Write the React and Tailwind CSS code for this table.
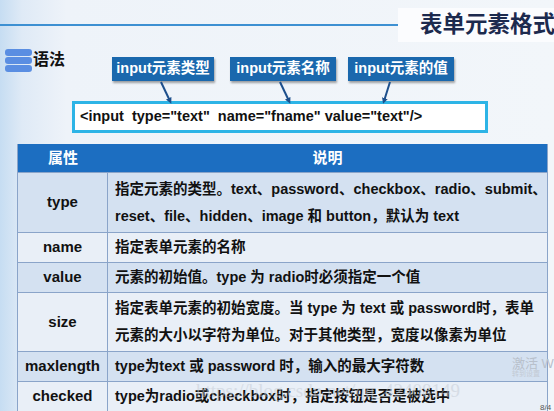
import React from "react";

const FONT = { fontFamily: '"Liberation Sans", Arial, "Noto Sans CJK SC", sans-serif' };

const rows = [
  { k: "type", h: "h-[60px]", bg: "bg-[#d4e1f1]", lines: ["指定元素的类型。text、password、checkbox、radio、submit、", "reset、file、hidden、image 和 button，默认为 text"] },
  { k: "name", h: "h-[30px]", bg: "bg-[#e9eff7]", lines: ["指定表单元素的名称"] },
  { k: "value", h: "h-[30px]", bg: "bg-[#d4e1f1]", lines: ["元素的初始值。type 为 radio时必须指定一个值"] },
  { k: "size", h: "h-[59px]", bg: "bg-[#e9eff7]", lines: ["指定表单元素的初始宽度。当 type 为 text 或 password时，表单", "元素的大小以字符为单位。对于其他类型，宽度以像素为单位"] },
  { k: "maxlength", h: "h-[30px]", bg: "bg-[#d4e1f1]", lines: ["type为text 或 password 时，输入的最大字符数"] },
  { k: "checked", h: "h-[30px]", bg: "bg-[#e9eff7]", lines: ["type为radio或checkbox时，指定按钮是否是被选中"] },
];

function Label({ children, w }) {
  return (
    <div className={`${w} h-[24px] bg-[#1a68ad] text-white font-bold text-[14.5px] flex items-center justify-center shadow-[1px_2px_2px_rgba(0,0,0,0.35)]`}>
      {children}
    </div>
  );
}

export default function App() {
  return (
    <div
      className="relative w-[554px] h-[411px] overflow-hidden bg-[linear-gradient(90deg,#c6ddf2_0%,#dfeaf6_4%,#eef3f9_12%,#f2f6fa_100%)] text-[#111]"
      style={FONT}
    >
      {/* title row */}
      <div className="flex items-center mt-[8px] h-[34px]">
        <div className="flex-1 h-[2px] bg-[#3d90d2]" />
        <div className="w-[156px] h-[34px] bg-[#fbfcfe] flex items-center pl-[22px] whitespace-nowrap">
          <span className="text-[22.5px] font-bold text-[#1c2a4e]">表单元素格式</span>
        </div>
      </div>

      {/* syntax area */}
      <div className="relative h-[102px]">
        <div className="flex items-start">
          <div className="flex items-center pl-[5px] pt-[7px]">
            <div className="flex flex-col gap-[1px] w-[27px]">
              <div className="h-[7px] rounded-[3px] bg-[#5a8ee2]" />
              <div className="h-[7px] rounded-[3px] bg-[#5a8ee2]" />
              <div className="h-[7px] rounded-[3px] bg-[#5a8ee2]" />
            </div>
            <span className="text-[16px] font-bold ml-[1px] -mt-[2px]">语法</span>
          </div>
          <div className="flex ml-[47px] pt-[15px]">
            <Label w="w-[102px]">input元素类型</Label>
            <div className="w-[16px]" />
            <Label w="w-[106px]">input元素名称</Label>
            <div className="w-[12px]" />
            <Label w="w-[106px]">input元素的值</Label>
          </div>
        </div>
        <div className="ml-[72px] mt-[20px] w-[416px] h-[32px] border-[3px] border-[#2db4e6] bg-white flex items-center pl-[5px]">
          <span className="text-[14.5px] font-bold whitespace-pre">{'<input  type="text"  name="fname" value="text"/>'}</span>
        </div>
        <svg className="absolute left-0 top-0" width="554" height="102" viewBox="0 42 554 102">
          <defs>
            <marker id="ah" markerWidth="6" markerHeight="6" refX="3" refY="3" orient="auto" markerUnits="userSpaceOnUse">
              <path d="M0,0 L6,3 L0,6 Z" fill="#1d4f8c" />
            </marker>
          </defs>
          <line x1="161" y1="82" x2="170" y2="101" stroke="#1d4f8c" strokeWidth="2" markerEnd="url(#ah)" />
          <line x1="280" y1="82" x2="289" y2="101" stroke="#1d4f8c" strokeWidth="2" markerEnd="url(#ah)" />
          <line x1="390" y1="82" x2="384" y2="101" stroke="#1d4f8c" strokeWidth="2" markerEnd="url(#ah)" />
        </svg>
      </div>

      {/* table */}
      <div className="ml-[17px] w-[531px] border-l border-r border-[#8aa4c9]">
        <div className="flex h-[28px] bg-[#1c6ec1] text-white font-bold text-[15px]">
          <div className="w-[90px] flex items-center justify-center">属性</div>
          <div className="flex-1 flex items-center justify-center">说明</div>
        </div>
        {rows.map((r) => (
          <div key={r.k} className={`flex ${r.h} ${r.bg} border-t border-[#8aa4c9]`}>
            <div className="w-[90px] flex items-center justify-center border-r border-[#8aa4c9] font-bold text-[15px]">
              {r.k}
            </div>
            <div className="flex-1 flex flex-col justify-center pl-[7px] font-bold text-[14.5px] leading-[27px] whitespace-nowrap">
              {r.lines.map((l, i) => (
                <div key={i}>{l}</div>
              ))}
            </div>
          </div>
        ))}
      </div>

      {/* watermark overlays */}
      <div
        className="absolute left-[196px] top-[377px] text-[19px] text-[#c4cbd5] opacity-50 whitespace-nowrap pointer-events-none"
        style={{ fontFamily: '"Liberation Serif", serif' }}
      >
        https://blog.csdn.net/qq_42408149
      </div>
      <div className="absolute left-[512px] top-[354px] text-[13px] text-[#b8c0cb] whitespace-nowrap pointer-events-none">激活 W</div>
      <div className="absolute left-[512px] top-[369px] text-[7px] text-[#c3cad4] whitespace-nowrap pointer-events-none">转到设置</div>
      <div className="absolute left-[540px] top-[402px] text-[8px] text-[#555] whitespace-nowrap">8/4</div>
    </div>
  );
}
